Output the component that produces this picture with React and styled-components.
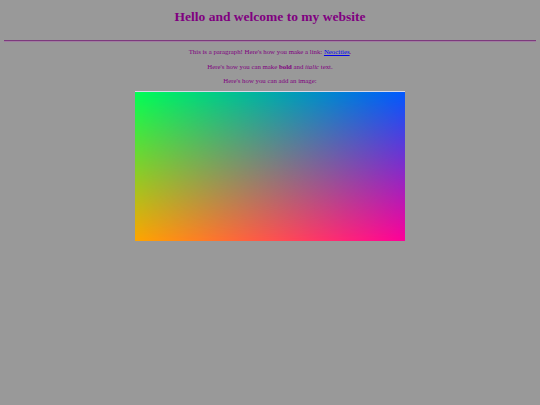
import React from "react";
import styled, { createGlobalStyle } from "styled-components";

const Global = createGlobalStyle`
  html, body {
    margin: 0;
    padding: 0;
    background: #999999;
  }
  body {
    font-family: "Liberation Serif", "Times New Roman", serif;
    color: #800080;
  }
`;

const Page = styled("div")`
  padding: 0 4px;
  text-align: center;
`;

const Title = styled("h1")`
  font-size: 13.5px;
  line-height: 15px;
  margin: 9px 0 0;
  font-weight: bold;
`;

const Rule = styled("hr")`
  margin: 16px 0 0;
  border: 0;
  border-top: 1px solid #7c3a7c;
  border-bottom: 1px solid #a07ca0;
  height: 0;
`;

const Para = styled("p")`
  font-size: 6.8px;
  line-height: 8px;
  margin: ${(p) => p.$top || 6.5}px 0 0;
`;

const Link = styled("a")`
  color: #0000ee;
`;

const Picture = styled("div")`
  position: relative;
  width: 270px;
  height: 150px;
  margin: 6px auto 0;
  border-top: 1px solid #d8d8e8;
  box-sizing: border-box;
  background: linear-gradient(to right, #ffa500, #ff0099);

  &::before {
    content: "";
    position: absolute;
    inset: 0;
    background: linear-gradient(to right, #00ff55, #0058ff);
    -webkit-mask-image: linear-gradient(to bottom, #000, transparent);
    mask-image: linear-gradient(to bottom, #000, transparent);
  }
`;

export default function App() {
  return (
    <>
      <Global />
      <Page>
        <Title>Hello and welcome to my website</Title>
        <Rule />
        <Para $top={6}>
          This is a paragraph! Here's how you make a link:{" "}
          <Link href="#">Neocities</Link>.
        </Para>
        <Para>
          Here's how you can make <b>bold</b> and <i>italic</i> text.
        </Para>
        <Para>Here's how you can add an image:</Para>
        <Picture />
      </Page>
    </>
  );
}
